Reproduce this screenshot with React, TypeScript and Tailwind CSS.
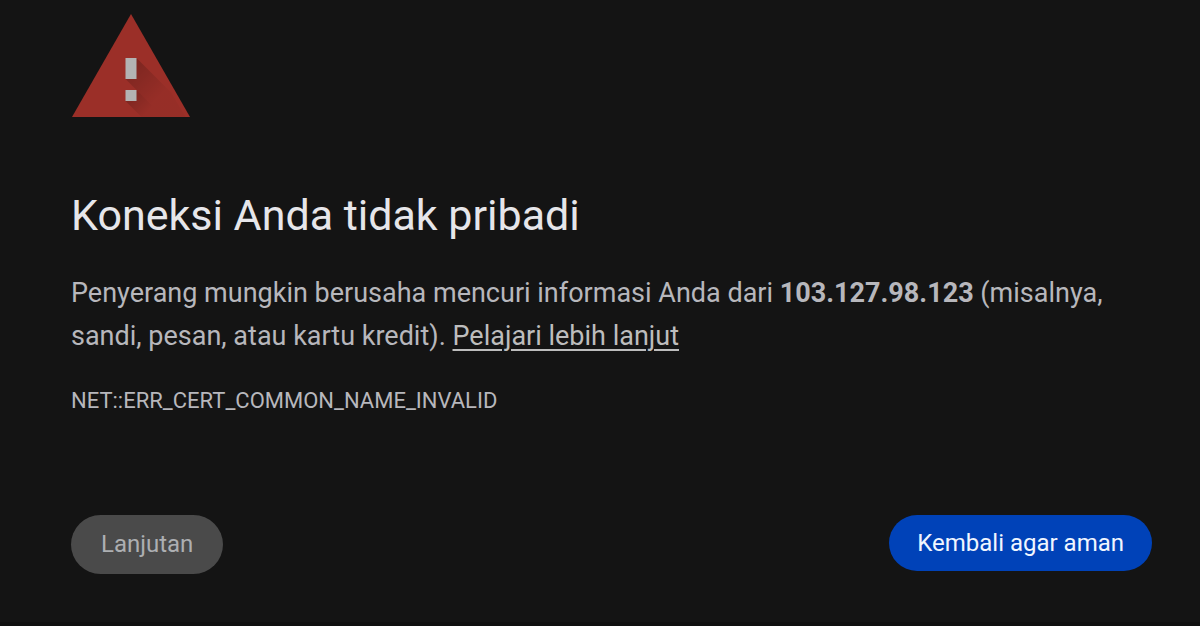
export default function App() {
  return (
    <main className="flex min-h-screen flex-col border-b-4 border-[#101010] bg-[#141414] pr-12 pl-[71px] pt-3.5 font-['Roboto',sans-serif] text-[#b7b7bc]">
      <svg className="h-[104px] w-[120px]" viewBox="0 0 120 104" role="img" aria-label="Peringatan">
        <defs>
          <linearGradient id="shade-top" gradientUnits="userSpaceOnUse" x1="60" y1="50" x2="90" y2="80">
            <stop offset="0" stopColor="#000" stopOpacity="0.2" />
            <stop offset="1" stopColor="#000" stopOpacity="0.03" />
          </linearGradient>
          <linearGradient id="shade-bottom" gradientUnits="userSpaceOnUse" x1="58" y1="80" x2="76" y2="98">
            <stop offset="0" stopColor="#000" stopOpacity="0.2" />
            <stop offset="1" stopColor="#000" stopOpacity="0.03" />
          </linearGradient>
        </defs>
        <path d="M60 0 119 103H1Z" fill="#9b2f28" />
        <path d="M65.500 44 100 78.500 114.500 103H92.500L54.500 65Z" fill="url(#shade-top)" />
        <path d="M65.500 76 92.500 103H70.500L54.500 87Z" fill="url(#shade-bottom)" />
        <path d="M54.500 44H65.500V65H54.500ZM54.500 76H65.500V87H54.500Z" fill="#b3b3b3" />
      </svg>
      <h1 className="mt-[71px] text-[43px] leading-[52px] text-[#e6e6ea]">Koneksi Anda tidak pribadi</h1>
      <p className="mt-[31px] text-[27px] leading-[43px]">
        Penyerang mungkin berusaha mencuri informasi Anda dari <strong className="font-bold">103.127.98.123</strong> (misalnya, sandi, pesan, atau kartu kredit).{" "}
        <a href="#" className="text-[#bdbdbd] underline decoration-2 underline-offset-4">Pelajari lebih lanjut</a>
      </p>
      <p className="mt-[27px] text-[22px] leading-8">NET::ERR_CERT_COMMON_NAME_INVALID</p>
      <div className="mt-[98px] flex items-start justify-between">
        <button type="button" className="rounded-full bg-[#4a4a4a] px-[30px] text-[24px] leading-[59px] text-[#adafb2]">Lanjutan</button>
        <button type="button" className="rounded-full bg-[#0042b8] px-7 text-[24px] leading-[56px] text-[#f0f6ff]">Kembali agar aman</button>
      </div>
    </main>
  );
}
